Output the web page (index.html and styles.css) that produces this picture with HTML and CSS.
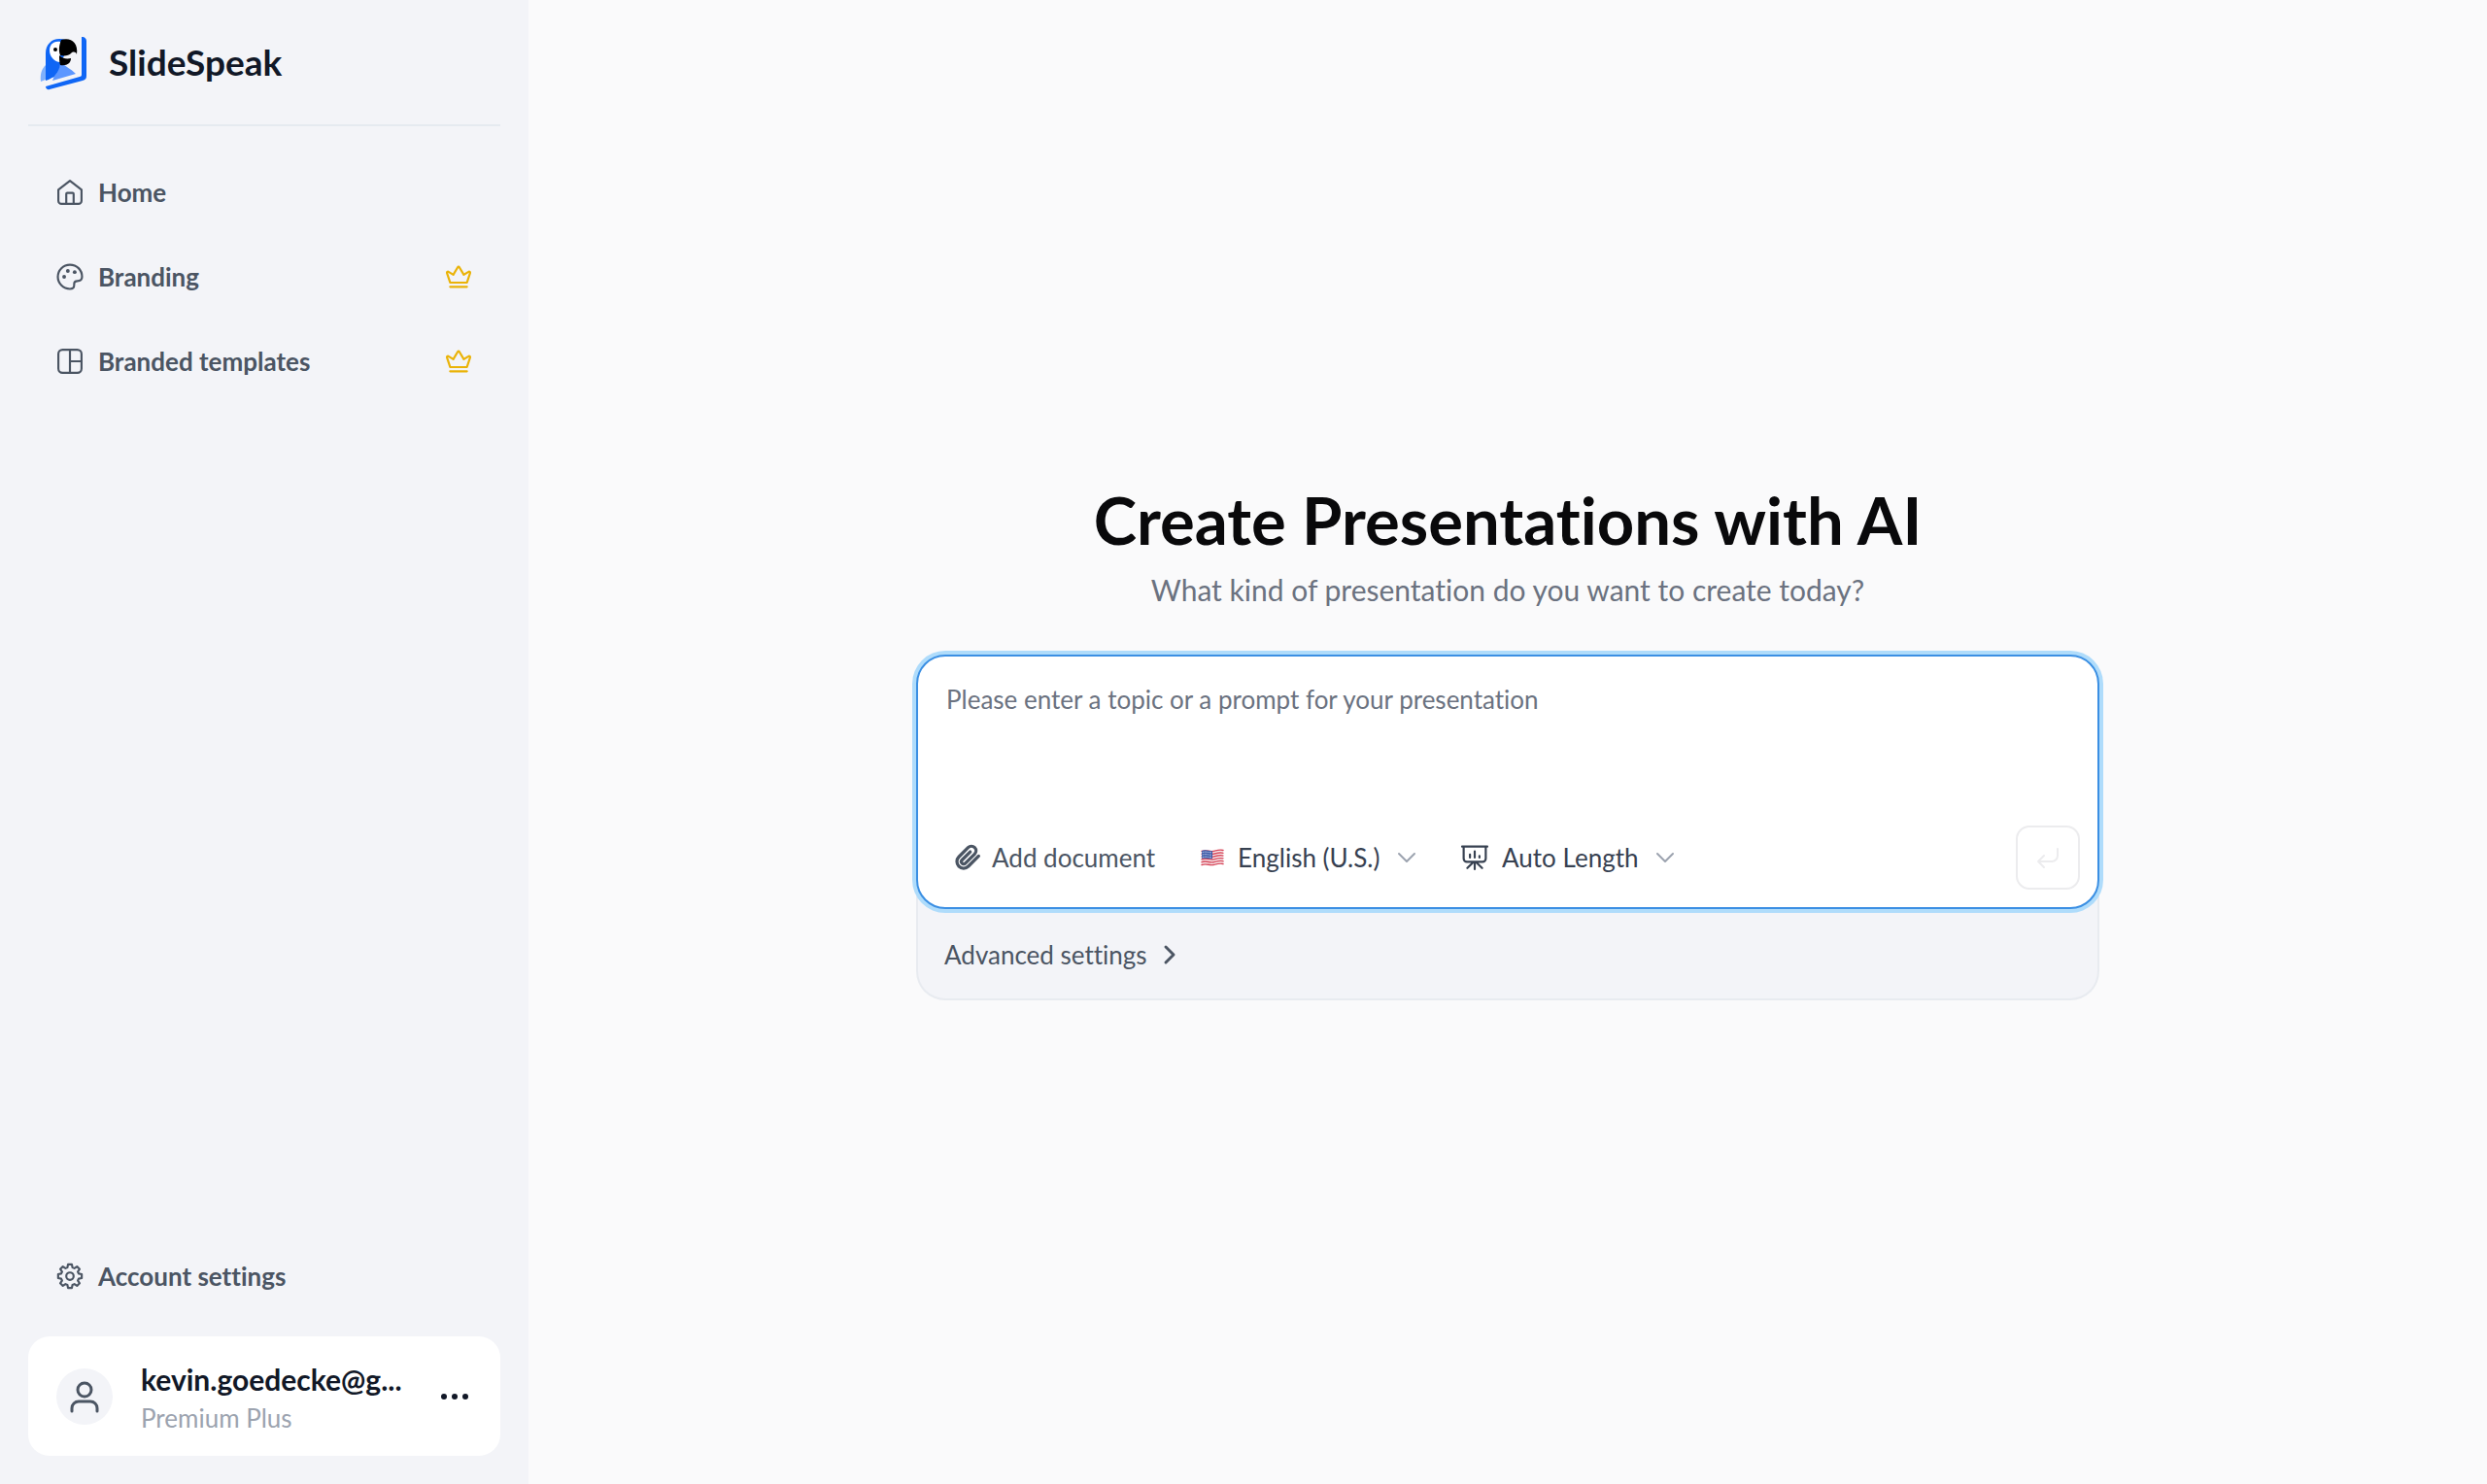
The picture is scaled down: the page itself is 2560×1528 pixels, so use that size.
FILE: index.html
```html
<!DOCTYPE html>
<html lang="en">
<head>
    <meta charset="UTF-8">
    <meta name="viewport" content="width=device-width, initial-scale=1.0">
    <title>SlideSpeak</title>
    <link rel="stylesheet" href="styles.css">
</head>
<body>
    <aside class="sidebar">
        <a class="brand" href="#">
            <svg class="brand-logo" viewBox="0 -4 48 60" aria-hidden="true">
                <path fill="#7fb0fb" d="M5 29C1 33-1 38 0 46l5-2z"/>
                <path fill="#0f66f5" d="M5 17C5 8 11 2 19 2c5 0 9 1 12 4L20 27l7 10-22 7z"/>
                <path fill="#5c97ff" d="M20 26c5 4 11 7 16 12L12 45z"/>
                <path fill="#0f66f5" d="M5 24l15 2c0 7-4 14-12 18l-3 1z"/>
                <path fill="#fff" d="M20 5C12 4 9 9 9 14c0 6 5 12 11 12z"/>
                <path fill="#000" d="M21 3c9-3 18 2 16 15-1-3-4-3-6-1-2 2-6 3-11 2-2-5-1-11 1-16z"/>
                <path fill="#000" d="M19 19c3 3 7 4 12 3 0 5-4 8-11 7-1-3-1-7-1-10z"/>
                <circle cx="15" cy="13" r="2" fill="#000"/>
                <path fill="#0f66f5" d="M42 0h1c2 0 4 2 4 4v36c0 3-1 4-4 5L9 54c-2 1-4-1-4-3l35-10c1 0 2-1 2-2z"/>
            </svg>
            <span>SlideSpeak</span>
        </a>
        <nav class="nav">
            <a class="nav-item" href="#">
                <svg class="icon" viewBox="0 0 24 24" aria-hidden="true"><path d="M1 9.500 12 1l11 8.500V20a3 3 0 0 1-3 3H4a3 3 0 0 1-3-3z"/><path d="M8.500 23v-9.500a1 1 0 0 1 1-1h5a1 1 0 0 1 1 1V23"/></svg>
                <span>Home</span>
            </a>
            <a class="nav-item" href="#">
                <svg class="icon" viewBox="0 0 24 24" aria-hidden="true"><path d="M12 .5a11.500 11.500 0 0 0 0 23c3.500 0 4-1.500 4-4v-1c0-2 1-2.500 3-2.500 3 0 4.500-1 4.500-4C23.500 5.500 18.500.5 12 .5z"/><g class="icon-dots"><circle cx="6.500" cy="12" r="1.800"/><circle cx="10" cy="6.500" r="1.800"/><circle cx="16.500" cy="7.500" r="1.800"/></g></svg>
                <span>Branding</span>
                <svg class="icon crown" viewBox="0 0 24 24" aria-label="Premium"><path d="M4 17.500 1 8.500c-.3-1 .7-1.800 1.500-1.200L7 10l4.200-7c.4-.7 1.200-.7 1.600 0L17 10l4.500-2.700c.8-.6 1.800.2 1.500 1.200l-3 9zM4 21.500h16"/></svg>
            </a>
            <a class="nav-item" href="#">
                <svg class="icon" viewBox="0 0 24 24" aria-hidden="true"><rect x="1" y="1" width="22" height="22" rx="4"/><path d="M12 1v22M12 12h11"/></svg>
                <span>Branded templates</span>
                <svg class="icon crown" viewBox="0 0 24 24" aria-label="Premium"><path d="M4 17.500 1 8.500c-.3-1 .7-1.800 1.500-1.200L7 10l4.200-7c.4-.7 1.200-.7 1.600 0L17 10l4.500-2.700c.8-.6 1.800.2 1.500 1.200l-3 9zM4 21.500h16"/></svg>
            </a>
        </nav>
        <a class="nav-item nav-bottom" href="#">
            <svg class="icon" viewBox="0 0 24 24" aria-hidden="true"><path d="M10.200.8h3.600l.6 2.900 1.800.8 2.500-1.700 2.500 2.500-1.700 2.500.8 1.800 2.900.6v3.600l-2.900.6-.8 1.800 1.700 2.500-2.500 2.500-2.500-1.700-1.800.8-.6 2.900h-3.600l-.6-2.900-1.800-.8-2.500 1.700-2.500-2.500 1.700-2.500-.8-1.800-2.900-.6v-3.600l2.900-.6.8-1.800-1.700-2.500 2.500-2.500 2.500 1.700 1.800-.8z"/><circle cx="12" cy="12" r="3.500"/></svg>
            <span>Account settings</span>
        </a>
        <div class="account">
            <div class="avatar">
                <svg class="avatar-icon" viewBox="0 0 28 30" aria-hidden="true"><circle cx="14" cy="8" r="7"/><path d="M1 30v-3a7 7 0 0 1 7-7h12a7 7 0 0 1 7 7v3"/></svg>
            </div>
            <div class="account-info">
                <div class="account-email">kevin.goedecke@g...</div>
                <div class="account-plan">Premium Plus</div>
            </div>
            <button class="more" type="button" aria-label="Account menu">
                <svg class="more-icon" viewBox="0 0 28 6" aria-hidden="true"><circle cx="3" cy="3" r="3"/><circle cx="14" cy="3" r="3"/><circle cx="25" cy="3" r="3"/></svg>
            </button>
        </div>
    </aside>

    <main class="main">
        <div class="creator">
            <h1>Create Presentations with AI</h1>
            <p class="subtitle">What kind of presentation do you want to create today?</p>
            <form class="panel">
                <div class="prompt-box">
                    <textarea class="prompt" aria-label="Topic or prompt" placeholder="Please enter a topic or a prompt for your presentation"></textarea>
                    <div class="toolbar">
                        <button class="tool" type="button">
                            <svg class="icon clip" viewBox="0 0 24 24" aria-hidden="true"><path d="m22.500 10.500-9.800 9.800a6.200 6.200 0 0 1-9-9l8.800-8.800a4.300 4.300 0 0 1 6.200 6.200l-8.800 8.800a2.200 2.200 0 0 1-3.200-3.200l7.800-7.800"/></svg>
                            <span>Add document</span>
                        </button>
                        <label class="tool" for="language">
                            <svg class="flag" viewBox="0 0 24 18" aria-hidden="true">
                                <path fill="#f5eef0" d="M1 2c5-2 8 1 12 0s7-2 10-1v15c-4-2-7 0-11 1s-7-1-11 0z"/>
                                <path fill="none" stroke="#d9475a" stroke-width="1.400" d="M1 2.500c5-2 8 1 12 0s7-2 10-1M1 5.300c5-2 8 1 12 0s7-2 10-1M1 8.100c5-2 8 1 12 0s7-2 10-1M1 10.900c5-2 8 1 12 0s7-2 10-1M1 13.700c5-2 8 1 12 0s7-2 10-1M1 16.500c5-2 8 1 12 0s7-2 10-1"/>
                                <path fill="#3d5aa8" d="M1 2c5-2 8 1 11 0v8c-4 1-7-1-11 0z"/>
                                <path fill="none" stroke="#c3cde8" stroke-width="1" stroke-dasharray="1 1.500" d="M2 3.500c4-1 6 .5 9 .2M2 6c4-1 6 .5 9 .2M2 8.500c4-1 6 .5 9 .2"/>
                            </svg>
                            <select class="picker" id="language" aria-label="Language">
                                <option>English (U.S.)</option>
                            </select>
                            <svg class="chevron" viewBox="0 0 18 10" aria-hidden="true"><path d="m1 1 8 8 8-8"/></svg>
                        </label>
                        <label class="tool" for="length">
                            <svg class="icon easel" viewBox="0 0 24 24" aria-hidden="true"><path d="M0 1.500h24M1.500 1.500V13a3 3 0 0 0 3 3h15a3 3 0 0 0 3-3V1.500M12 16v7M10 17l-5 5M14 17l5 5M7.500 9v3M12 6v6M16.500 10.500v1.500"/></svg>
                            <select class="picker" id="length" aria-label="Length">
                                <option>Auto Length</option>
                            </select>
                            <svg class="chevron" viewBox="0 0 18 10" aria-hidden="true"><path d="m1 1 8 8 8-8"/></svg>
                        </label>
                        <button class="submit" type="submit" aria-label="Create" disabled>
                            <svg class="submit-icon" viewBox="0 0 22 20" aria-hidden="true"><path d="M21 1v7a6 6 0 0 1-6 6H1M7 8l-6 6 6 6"/></svg>
                        </button>
                    </div>
                </div>
                <button class="advanced" type="button">
                    <span>Advanced settings</span>
                    <svg class="advanced-icon" viewBox="0 0 10 18" aria-hidden="true"><path d="m1 1 8 8-8 8"/></svg>
                </button>
            </form>
        </div>
    </main>
</body>
</html>
```
FILE: styles.css
```css
* {
    box-sizing: border-box;
}
body {
    display: flex;
    min-height: 100vh;
    margin: 0;
    font-family: Lato, "Open Sans", sans-serif;
    font-size: 26px;
    line-height: 36px;
    font-variant-ligatures: none;
    color: #4b5563;
    background-color: #fafafb;
}
a {
    color: inherit;
    text-decoration: none;
}
button, select, textarea {
    padding: 0;
    border: none;
    background: none;
    font: inherit;
    font-variant-ligatures: none;
    color: inherit;
}
button {
    cursor: pointer;
}
svg {
    flex-shrink: 0;
    fill: none;
    stroke-linecap: round;
    stroke-linejoin: round;
    overflow: visible;
}

/* Sidebar */
.sidebar {
    display: flex;
    flex-direction: column;
    flex-shrink: 0;
    width: 544px;
    padding: 0 29px 29px;
    background-color: #f3f4f8;
}
.brand {
    display: flex;
    align-items: center;
    gap: 22px;
    height: 130px;
    border-bottom: 2px solid #e5eaf0;
    padding: 0 13px;
    font-size: 37px;
    font-weight: 700;
    color: #111827;
}
.brand-logo {
    width: 48px;
    height: 60px;
}
.nav {
    display: flex;
    flex-direction: column;
    gap: 29px;
    padding-top: 39px;
}
.nav-item {
    display: flex;
    align-items: center;
    gap: 15px;
    height: 58px;
    padding: 0 29px;
    font-weight: 700;
}
.nav-bottom {
    margin-top: auto;
}
.icon {
    width: 28px;
    height: 28px;
    padding: 1px;
    stroke: currentColor;
    stroke-width: 2;
}
.icon-dots {
    fill: currentColor;
    stroke: none;
}
.crown {
    margin-left: auto;
    stroke: #eab308;
}
.account {
    display: flex;
    align-items: center;
    height: 123px;
    margin-top: 33px;
    padding: 0 29px;
    border-radius: 22px;
    background-color: #fff;
}
.avatar {
    display: flex;
    align-items: center;
    justify-content: center;
    width: 58px;
    height: 58px;
    border-radius: 50%;
    background-color: #f3f4f8;
}
.avatar-icon {
    width: 28px;
    height: 30px;
    stroke: #4b5563;
    stroke-width: 3;
}
.account-info {
    flex: 1;
    margin-left: 29px;
}
.account-email {
    font-size: 30px;
    line-height: 44px;
    font-weight: 700;
    color: #111827;
}
.account-plan {
    color: #9ca3af;
}
.more {
    display: flex;
    padding: 12px 4px;
}
.more-icon {
    width: 28px;
    height: 6px;
    fill: #111827;
}

/* Prompt area */
.main {
    display: flex;
    flex: 1;
    align-items: center;
    justify-content: center;
    padding: 40px;
}
.creator {
    width: 100%;
    max-width: 1218px;
}
h1 {
    margin: 0;
    font-size: 67px;
    line-height: 72px;
    font-weight: 700;
    text-align: center;
    color: #09090b;
}
.subtitle {
    margin: 14px 0 45px;
    font-size: 30px;
    line-height: 44px;
    text-align: center;
    color: #6b7280;
}
.panel {
    border-radius: 30px;
    border: 2px solid #e8ebf0;
    border-top: none;
    background-color: #f3f4f8;
}
.prompt-box {
    margin: 0 -2px;
    padding: 26px 18px 18px 29px;
    border: 2px solid #3b8fe3;
    border-radius: 30px;
    background-color: #fff;
    box-shadow: 0 0 0 4px #afdcfb;
}
.prompt {
    display: block;
    width: 100%;
    height: 148px;
    outline: none;
    resize: none;
}
.prompt::placeholder {
    color: #6b7280;
    opacity: 1;
}
.toolbar {
    display: flex;
    align-items: center;
    gap: 47px;
    padding-left: 8px;
}
.tool {
    display: flex;
    align-items: center;
    gap: 11px;
}
label.tool {
    gap: 14px;
    color: #374151;
}
.clip {
    stroke-width: 3;
}
.flag {
    width: 24px;
    height: 18px;
}
.picker {
    appearance: none;
    outline: none;
}
.chevron {
    width: 18px;
    height: 10px;
    margin-left: 4px;
    stroke: #9ca3af;
    stroke-width: 2;
}
.submit {
    display: flex;
    align-items: center;
    justify-content: center;
    width: 66px;
    height: 66px;
    margin-left: auto;
    border: 2px solid #ececee;
    border-radius: 14px;
}
.submit-icon {
    width: 22px;
    height: 20px;
    stroke: #ececee;
    stroke-width: 2;
}
.advanced {
    display: flex;
    align-items: center;
    gap: 18px;
    padding: 29px 27px 27px;
}
.advanced-icon {
    width: 10px;
    height: 18px;
    stroke: currentColor;
    stroke-width: 3;
}
```
